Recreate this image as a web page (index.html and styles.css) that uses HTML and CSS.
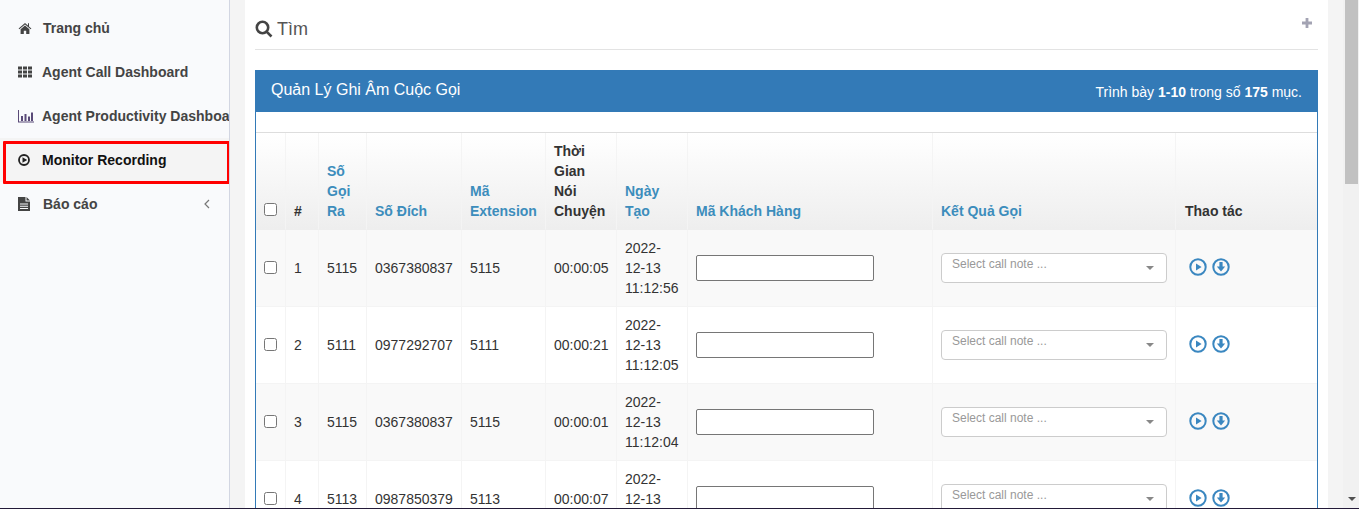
FILE: index.html
```html
<!DOCTYPE html>
<html lang="vi">
<head>
<meta charset="utf-8">
<title>Monitor Recording</title>
<link rel="stylesheet" href="styles.css">
</head>
<body>
<div class="app">
  <aside class="sidebar">
    <ul class="menu">
      <li class="menu-item">
        <svg class="menu-icon icon-wide" viewBox="0 0 14 14"><path d="M7 2 .6 7.4l.7.8L7 3.5l5.7 4.7.7-.8-2.4-2V2.2H10v2.3L7 2zM2.6 8.3V13h3.2V9.8h2.4V13h3.2V8.3L7 4.6 2.6 8.3z"/></svg>
        <span>Trang chủ</span>
      </li>
      <li class="menu-item">
        <svg class="menu-icon" viewBox="0 0 14 14"><path d="M0 1.5h4v3H0zM5 1.500h4v3H5zM10 1.500h4v3h-4zM0 5.500h4v3H0zM5 5.500h4v3H5zM10 5.500h4v3h-4zM0 9.500h4v3H0zM5 9.500h4v3H5zM10 9.500h4v3h-4z"/></svg>
        <span>Agent Call Dashboard</span>
      </li>
      <li class="menu-item">
        <svg class="menu-icon icon-chart" viewBox="0 0 16 14"><path d="M0 1h1v11.500h15v1H0zM3 7h2v5H3zM6.500 5h2v7h-2zM10 7.500h2V12h-2zM13 3.500h2V12h-2z"/></svg>
        <span>Agent Productivity Dashboard</span>
      </li>
      <li class="menu-item active">
        <svg class="menu-icon" viewBox="0 0 14 14"><circle class="ring" cx="6" cy="7" r="5"/><path d="M4.500 4.200 9.200 7l-4.700 2.800z"/></svg>
        <span>Monitor Recording</span>
      </li>
      <li class="menu-item">
        <svg class="menu-icon icon-wide" viewBox="0 0 14 14"><path d="M0 0h7.500v4.500H12V14H0zM8.500 0 12 3.500H8.500zM2 6.500v1h8v-1zM2 8.700v1h8v-1zM2 10.900v1h8v-1z" fill-rule="evenodd"/></svg>
        <span>Báo cáo</span>
        <svg class="menu-caret" viewBox="0 0 6 10"><path d="M5 1 1 5l4 4"/></svg>
      </li>
    </ul>
    <div class="highlight"></div>
  </aside>

  <div class="gutter">
    <main class="content">
      <header class="search-head">
        <svg class="search-icon" viewBox="0 0 18 18"><circle cx="7.500" cy="7.500" r="5.700"/><path d="m11.800 11.800 4.700 4.700"/></svg>
        <span class="search-title">Tìm</span>
        <svg class="plus-icon" viewBox="0 0 10 10"><path d="M3.600 0h2.800v3.600H10v2.800H6.400V10H3.600V6.400H0V3.600h3.600z"/></svg>
      </header>

      <section class="panel">
        <div class="panel-heading">
          <span class="panel-title">Quản Lý Ghi Âm Cuộc Gọi</span>
          <span class="panel-summary">Trình bày <b>1-10</b> trong số <b>175</b> mục.</span>
        </div>
        <div class="panel-body">
          <table class="grid">
            <colgroup>
              <col class="c-check"><col class="c-num"><col class="c-from"><col class="c-to"><col class="c-ext"><col class="c-time"><col class="c-date"><col class="c-customer"><col class="c-result"><col class="c-actions">
            </colgroup>
            <thead>
              <tr>
                <th><input type="checkbox" class="check"></th>
                <th>#</th>
                <th class="sortable">Số Gọi Ra</th>
                <th class="sortable">Số Đích</th>
                <th class="sortable">Mã Extension</th>
                <th>Thời Gian Nói Chuyện</th>
                <th class="sortable">Ngày Tạo</th>
                <th class="sortable">Mã Khách Hàng</th>
                <th class="sortable">Kết Quả Gọi</th>
                <th class="th-actions">Thao tác</th>
              </tr>
            </thead>
            <tbody>
              <tr>
                <td><input type="checkbox" class="check"></td>
                <td>1</td><td>5115</td><td>0367380837</td><td>5115</td><td>00:00:05</td><td>2022-12-13 11:12:56</td>
                <td><input type="text" class="code"></td>
                <td><div class="select"><span>Select call note ...</span><i class="select-arrow"></i></div></td>
                <td><div class="actions">
                  <svg class="action" viewBox="0 0 18 18"><circle cx="9" cy="9" r="7.700"/><path class="solid" d="M7 5.400 12.600 9 7 12.600z"/></svg>
                  <svg class="action" viewBox="0 0 18 18"><circle cx="9" cy="9" r="7.700"/><path class="solid" d="M7.400 4h3.200v4.600h2.600L9 13.400 4.800 8.600h2.600z"/></svg>
                </div></td>
              </tr>
              <tr>
                <td><input type="checkbox" class="check"></td>
                <td>2</td><td>5111</td><td>0977292707</td><td>5111</td><td>00:00:21</td><td>2022-12-13 11:12:05</td>
                <td><input type="text" class="code"></td>
                <td><div class="select"><span>Select call note ...</span><i class="select-arrow"></i></div></td>
                <td><div class="actions">
                  <svg class="action" viewBox="0 0 18 18"><circle cx="9" cy="9" r="7.700"/><path class="solid" d="M7 5.400 12.600 9 7 12.600z"/></svg>
                  <svg class="action" viewBox="0 0 18 18"><circle cx="9" cy="9" r="7.700"/><path class="solid" d="M7.400 4h3.200v4.600h2.600L9 13.400 4.800 8.600h2.600z"/></svg>
                </div></td>
              </tr>
              <tr>
                <td><input type="checkbox" class="check"></td>
                <td>3</td><td>5115</td><td>0367380837</td><td>5115</td><td>00:00:01</td><td>2022-12-13 11:12:04</td>
                <td><input type="text" class="code"></td>
                <td><div class="select"><span>Select call note ...</span><i class="select-arrow"></i></div></td>
                <td><div class="actions">
                  <svg class="action" viewBox="0 0 18 18"><circle cx="9" cy="9" r="7.700"/><path class="solid" d="M7 5.400 12.600 9 7 12.600z"/></svg>
                  <svg class="action" viewBox="0 0 18 18"><circle cx="9" cy="9" r="7.700"/><path class="solid" d="M7.400 4h3.200v4.600h2.600L9 13.400 4.800 8.600h2.600z"/></svg>
                </div></td>
              </tr>
              <tr>
                <td><input type="checkbox" class="check"></td>
                <td>4</td><td>5113</td><td>0987850379</td><td>5113</td><td>00:00:07</td><td>2022-12-13 11:12:03</td>
                <td><input type="text" class="code"></td>
                <td><div class="select"><span>Select call note ...</span><i class="select-arrow"></i></div></td>
                <td><div class="actions">
                  <svg class="action" viewBox="0 0 18 18"><circle cx="9" cy="9" r="7.700"/><path class="solid" d="M7 5.400 12.600 9 7 12.600z"/></svg>
                  <svg class="action" viewBox="0 0 18 18"><circle cx="9" cy="9" r="7.700"/><path class="solid" d="M7.400 4h3.200v4.600h2.600L9 13.400 4.800 8.600h2.600z"/></svg>
                </div></td>
              </tr>
            </tbody>
          </table>
        </div>
      </section>
    </main>
  </div>

  <div class="scrollrail">
    <div class="scrollthumb"></div>
    <i class="scrollarrow"></i>
  </div>
</div>
<div class="edge"></div>
</body>
</html>
```

FILE: styles.css
```css
* { box-sizing: border-box; }

html, body {
  margin: 0;
  height: 509px;
  overflow: hidden;
}

body {
  font-family: "Liberation Sans", Arial, sans-serif;
  font-size: 14px;
  line-height: 20px;
  color: #333;
  background: #f4f4f4;
}

.app {
  display: flex;
  height: 508px;
  overflow: hidden;
}

.edge {
  height: 1px;
  background: #231a38;
}

/* Sidebar */
.sidebar {
  position: relative;
  flex: 0 0 230px;
  padding-top: 6px;
  background: #f9fafc;
  border-right: 1px solid #d2d6e2;
  overflow: hidden;
}

.menu {
  list-style: none;
  margin: 0;
  padding: 0;
}

.menu-item {
  display: flex;
  align-items: center;
  height: 44px;
  padding-left: 18px;
  font-weight: bold;
  color: #444;
  white-space: nowrap;
}

.menu-item.active {
  background: #f4f4f4;
  color: #111;
}

.menu-icon {
  flex: none;
  width: 14px;
  height: 14px;
  margin-right: 10px;
  fill: #444;
}

.menu-icon.icon-wide { margin-right: 11px; }

.menu-item.active .menu-icon { fill: #222; }

.icon-chart {
  width: 16px;
  margin-right: 8px;
  fill: #5a4a78;
}

.ring {
  fill: none;
  stroke: #222;
  stroke-width: 1.8;
}

.menu-caret {
  flex: none;
  width: 6px;
  height: 10px;
  margin-left: 107px;
  fill: none;
  stroke: #777;
  stroke-width: 1.2;
}

.highlight {
  position: absolute;
  left: 3px;
  top: 141px;
  width: 227px;
  height: 43px;
  border: 3px solid #f00;
  border-radius: 1px;
}

/* Main column */
.gutter {
  flex: 1 1 auto;
  min-width: 0;
  padding: 0 15px;
  background: #f4f4f4;
}

.content {
  height: 100%;
  padding: 0 10px;
  background: #fff;
  overflow: hidden;
}

.search-head {
  display: flex;
  align-items: center;
  height: 50px;
  padding-top: 8px;
  border-bottom: 1px solid #e3e3e3;
}

.search-icon {
  flex: none;
  width: 18px;
  height: 18px;
  margin-right: 4px;
  fill: none;
  stroke: #444;
  stroke-width: 2.6;
}

.search-title {
  font-size: 18px;
  color: #555;
}

.plus-icon {
  flex: none;
  width: 10px;
  height: 10px;
  margin: -12px 6px 0 auto;
  fill: #a3a3b3;
}

/* Panel */
.panel {
  margin-top: 20px;
  border: solid #337ab7;
  border-width: 0 1px;
}

.panel-heading {
  display: flex;
  align-items: center;
  justify-content: space-between;
  height: 42px;
  margin: 0 -1px;
  padding: 0 16px;
  background: #337ab7;
  color: #fff;
}

.panel-title {
  font-size: 16px;
  margin-top: -2px;
}

.panel-summary { margin-top: 1px; }

.panel-body {
  padding-top: 20px;
  background: #fff;
}

/* Table */
.grid {
  width: 1061px;
  table-layout: fixed;
  border-collapse: separate;
  border-spacing: 0;
  border-top: 1px solid #ddd;
}

.c-check { width: 30px; }
.c-num { width: 33px; }
.c-from { width: 48px; }
.c-to { width: 95px; }
.c-ext { width: 84px; }
.c-time { width: 71px; }
.c-date { width: 71px; }
.c-customer { width: 245px; }
.c-result { width: 243px; }
.c-actions { width: 141px; }

.grid th,
.grid td {
  padding: 8px;
  border-right: 1px solid #f4f4f4;
  border-bottom: 1px solid #f4f4f4;
  text-align: left;
}

.grid th:last-child,
.grid td:last-child { border-right: 0; }

.grid th {
  vertical-align: bottom;
  color: #333;
  background: linear-gradient(#fff, #eee);
  border-bottom-color: #eee;
}

.grid th.sortable { color: #3c8dbc; }

.grid th.th-actions { padding-left: 9px; }

.grid td { vertical-align: middle; }

.grid tbody tr:nth-child(odd) td { background: #f9f9f9; }

.check {
  display: block;
  width: 13px;
  height: 13px;
  margin: -1px 0 1px;
}

.grid th .check { margin: 0 0 5px; }

.code {
  display: block;
  width: 178px;
  height: 26px;
  margin: 0;
  padding: 1px 2px;
  border: 1px solid #767676;
  border-radius: 2px;
  background: #fff;
}

.select {
  display: flex;
  align-items: flex-start;
  justify-content: space-between;
  height: 30px;
  margin-top: -1px;
  padding: 1px 12px 0 10px;
  border: 1px solid #ccc;
  border-radius: 4px;
  background: #fff;
  font-size: 12px;
  line-height: 18px;
  color: #999;
}

.select-arrow {
  width: 0;
  height: 0;
  margin-top: 11px;
  border: solid transparent;
  border-width: 4px 4px 0;
  border-top-color: #888;
}

.actions {
  display: flex;
  gap: 5px;
  margin: -2px 0 0 5px;
}

.action {
  flex: none;
  width: 18px;
  height: 18px;
  fill: none;
  stroke: #3a87c0;
  stroke-width: 2;
}

.action .solid {
  fill: #3a87c0;
  stroke: none;
}

/* Window scrollbar */
.scrollrail {
  position: relative;
  flex: 0 0 16px;
  background: #f1f1f1;
}

.scrollthumb {
  width: 13px;
  height: 184px;
  margin-left: 2px;
  background: #c1c1c1;
}

.scrollarrow {
  position: absolute;
  left: 5px;
  bottom: 7px;
  width: 0;
  height: 0;
  border: solid transparent;
  border-width: 4px 4px 0;
  border-top-color: #505050;
}
```
